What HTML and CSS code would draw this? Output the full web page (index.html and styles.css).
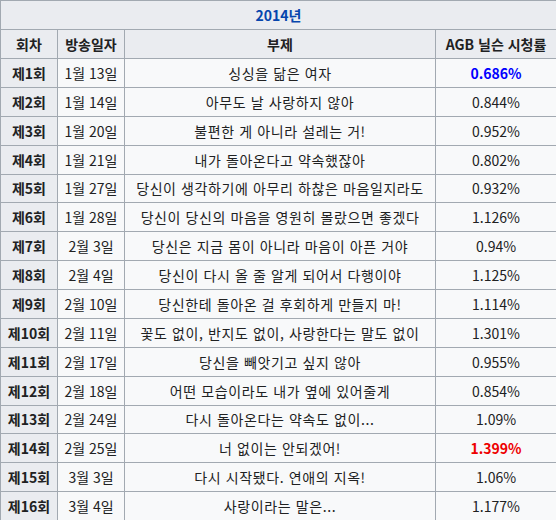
FILE: index.html
```html
<!DOCTYPE html>
<html lang="ko">
<head>
<meta charset="utf-8">
<link rel="stylesheet" href="styles.css">
</head>
<body>
<table class="ratings">
  <colgroup>
    <col class="c-ep">
    <col class="c-date">
    <col class="c-title">
    <col class="c-rate">
  </colgroup>
  <thead>
    <tr class="year-row"><th colspan="4" class="year">2014년</th></tr>
    <tr class="head-row"><th>회차</th><th>방송일자</th><th>부제</th><th>AGB 닐슨 시청률</th></tr>
  </thead>
  <tbody>
    <tr><th>제1회</th><td>1월 13일</td><td class="sub">싱싱을 닮은 여자</td><td class="min">0.686%</td></tr>
    <tr><th>제2회</th><td>1월 14일</td><td class="sub">아무도 날 사랑하지 않아</td><td>0.844%</td></tr>
    <tr><th>제3회</th><td>1월 20일</td><td class="sub">불편한 게 아니라 설레는 거!</td><td>0.952%</td></tr>
    <tr><th>제4회</th><td>1월 21일</td><td class="sub">내가 돌아온다고 약속했잖아</td><td>0.802%</td></tr>
    <tr><th>제5회</th><td>1월 27일</td><td class="sub">당신이 생각하기에 아무리 하찮은 마음일지라도</td><td>0.932%</td></tr>
    <tr><th>제6회</th><td>1월 28일</td><td class="sub">당신이 당신의 마음을 영원히 몰랐으면 좋겠다</td><td>1.126%</td></tr>
    <tr><th>제7회</th><td>2월 3일</td><td class="sub">당신은 지금 몸이 아니라 마음이 아픈 거야</td><td>0.94%</td></tr>
    <tr><th>제8회</th><td>2월 4일</td><td class="sub">당신이 다시 올 줄 알게 되어서 다행이야</td><td>1.125%</td></tr>
    <tr><th>제9회</th><td>2월 10일</td><td class="sub">당신한테 돌아온 걸 후회하게 만들지 마!</td><td>1.114%</td></tr>
    <tr><th>제10회</th><td>2월 11일</td><td class="sub">꽃도 없이, 반지도 없이, 사랑한다는 말도 없이</td><td>1.301%</td></tr>
    <tr><th>제11회</th><td>2월 17일</td><td class="sub">당신을 빼앗기고 싶지 않아</td><td>0.955%</td></tr>
    <tr><th>제12회</th><td>2월 18일</td><td class="sub">어떤 모습이라도 내가 옆에 있어줄게</td><td>0.854%</td></tr>
    <tr><th>제13회</th><td>2월 24일</td><td class="sub">다시 돌아온다는 약속도 없이...</td><td>1.09%</td></tr>
    <tr><th>제14회</th><td>2월 25일</td><td class="sub">너 없이는 안되겠어!</td><td class="max">1.399%</td></tr>
    <tr><th>제15회</th><td>3월 3일</td><td class="sub">다시 시작됐다. 연애의 지옥!</td><td>1.06%</td></tr>
    <tr><th>제16회</th><td>3월 4일</td><td class="sub">사랑이라는 말은...</td><td>1.177%</td></tr>
  </tbody>
</table>
</body>
</html>
```
FILE: styles.css
```css
html, body {
  margin: 0;
  padding: 0;
  background: #ffffff;
}
.ratings {
  border-collapse: collapse;
  table-layout: fixed;
  width: 556px;
  font-family: "Noto Sans CJK KR", "Noto Sans", sans-serif;
  font-size: 14px;
  color: #202122;
  background: #f8f9fa;
  border: 1px solid #a2a9b1;
}
.c-ep { width: 57px; }
.c-date { width: 67px; }
.c-title { width: 311px; }
.c-rate { width: 121px; }
.ratings th,
.ratings td {
  border: 1px solid #a2a9b1;
  padding: 0 2px;
  text-align: center;
  white-space: nowrap;
  height: 28px;
  line-height: 20px;
}
.ratings th {
  background: #eaecf0;
  font-weight: bold;
}
.ratings tbody tr th,
.ratings tbody tr td {
  height: 27.875px;
}
.ratings td.sub {
  letter-spacing: 0.6px;
}
.year {
  color: #0645ad;
}
.min {
  color: #0000ff;
  font-weight: bold;
}
.max {
  color: #ee0000;
  font-weight: bold;
}
```
